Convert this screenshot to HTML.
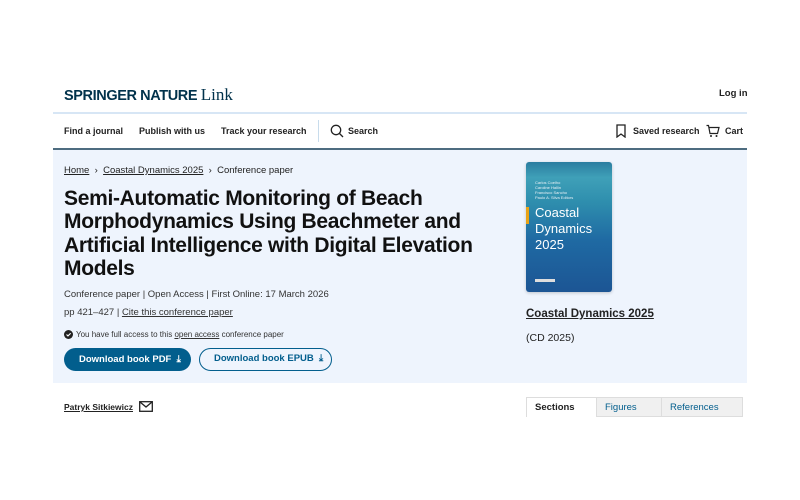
<!DOCTYPE html>
<html><head><style>
*{margin:0;padding:0;box-sizing:border-box}
body{width:800px;height:500px;background:#fff;font-family:"Liberation Sans",sans-serif;color:#222;position:relative;overflow:hidden}
.a{position:absolute}
a{color:#222}
.nav{font-size:9px;font-weight:bold;color:#222;top:126px}
</style></head><body>
<div class="a" style="left:64px;top:85px;font-size:14.5px;font-weight:bold;color:#01324b;letter-spacing:-0.4px">SPRINGER NATURE <span style="font-family:'Liberation Serif',serif;font-weight:normal;font-size:17px;letter-spacing:0">Link</span></div>
<div class="a" style="left:719px;top:88px;font-size:9.5px;font-weight:bold">Log in</div>
<div class="a" style="left:53px;top:112px;width:694px;height:2px;background:#d7e6f5"></div>
<div class="a nav" style="left:64px">Find a journal</div>
<div class="a nav" style="left:139px">Publish with us</div>
<div class="a nav" style="left:221px">Track your research</div>
<div class="a" style="left:318px;top:120px;width:1px;height:22px;background:#c8dcec"></div>
<svg class="a" style="left:330px;top:124px" width="14" height="14" viewBox="0 0 14 14"><circle cx="6" cy="6" r="4.7" fill="none" stroke="#222" stroke-width="1.3"/><path d="M9.5 9.5L13 13" stroke="#222" stroke-width="1.3"/></svg>
<div class="a nav" style="left:348px">Search</div>
<svg class="a" style="left:615px;top:124px" width="12" height="14" viewBox="0 0 12 14"><path d="M2 1h8v12L6 10 2 13z" fill="none" stroke="#222" stroke-width="1.3"/></svg>
<div class="a nav" style="left:633px">Saved research</div>
<svg class="a" style="left:706px;top:124px" width="14" height="14" viewBox="0 0 14 14"><path d="M0.5 1.5h2l1.5 8h7.5l1.5-6H3" fill="none" stroke="#222" stroke-width="1.2"/><circle cx="5" cy="12" r="1" fill="#222"/><circle cx="10.5" cy="12" r="1" fill="#222"/></svg>
<div class="a nav" style="left:725px">Cart</div>
<div class="a" style="left:53px;top:148px;width:694px;height:2px;background:#4d6c80"></div>
<div class="a" style="left:53px;top:150px;width:694px;height:233px;background:#eef4fd"></div>
<div class="a" style="left:64px;top:165px;font-size:9.5px"><u>Home</u> &nbsp;›&nbsp; <u>Coastal Dynamics 2025</u> &nbsp;›&nbsp; Conference paper</div>
<div class="a" style="left:64px;top:187px;width:440px;font-size:21px;font-weight:bold;line-height:23.3px;letter-spacing:-0.3px;color:#111">Semi-Automatic Monitoring of Beach Morphodynamics Using Beachmeter and Artificial Intelligence with Digital Elevation Models</div>
<div class="a" style="left:64px;top:289px;font-size:9.5px;color:#333">Conference paper | Open Access | First Online: 17 March 2026</div>
<div class="a" style="left:64px;top:307px;font-size:9.5px;color:#333">pp 421–427 | <u>Cite this conference paper</u></div>
<svg class="a" style="left:64px;top:330px" width="9" height="9" viewBox="0 0 10 10"><circle cx="5" cy="5" r="5" fill="#222"/><path d="M2.8 5l1.6 1.6L7.4 3.6" stroke="#fff" fill="none" stroke-width="1.2"/></svg>
<div class="a" style="left:76px;top:330px;font-size:8px;color:#333">You have full access to this <u>open access</u> conference paper</div>
<div class="a" style="left:64px;top:348px;width:127px;height:23px;border-radius:12px;background:#025e8d;color:#fff;font-size:9.5px;font-weight:bold;line-height:23px;padding-left:15px">Download book PDF &nbsp;⤓</div>
<div class="a" style="left:199px;top:348px;width:133px;height:23px;border-radius:12px;border:1.5px solid #025e8d;color:#025e8d;font-size:9.5px;font-weight:bold;line-height:20px;padding-left:14px">Download book EPUB &nbsp;⤓</div>
<div class="a" style="left:526px;top:162px;width:86px;height:130px;border-radius:3px;background:linear-gradient(#2a7da0 0%,#3fa0b8 12%,#2f8fae 30%,#1f6aa3 60%,#1c5594 100%);overflow:hidden;box-shadow:0 1px 3px rgba(0,0,0,.2)">
<div class="a" style="left:0;top:45px;width:3px;height:17px;background:#e8a317"></div>
<div class="a" style="left:9px;top:18px;font-size:4px;color:#e6f0f5;line-height:5px">Carlos Coelho<br>Caroline Hallin<br>Francisco Sancho<br>Paulo A. Silva Editors</div>
<div class="a" style="left:9px;top:43px;font-size:13px;color:#fff;line-height:16px">Coastal<br>Dynamics<br>2025</div>
<div class="a" style="left:9px;top:117px;width:20px;height:3px;background:#ddd"></div>
</div>
<div class="a" style="left:526px;top:308px;font-size:11.5px;font-weight:bold"><u>Coastal Dynamics 2025</u></div>
<div class="a" style="left:526px;top:332px;font-size:10.5px">(CD 2025)</div>
<div class="a" style="left:64px;top:402px;font-size:8.5px;font-weight:bold"><u>Patryk Sitkiewicz</u></div>
<svg class="a" style="left:139px;top:401px" width="14" height="11" viewBox="0 0 14 11"><rect x="0.7" y="0.7" width="12.6" height="9.6" fill="none" stroke="#222" stroke-width="1.3"/><path d="M1 1l6 5 6-5" fill="none" stroke="#222" stroke-width="1.3"/></svg>
<div class="a" style="left:526px;top:397px;width:217px;height:20px;background:#f0f0f0;border:1px solid #ddd"></div>
<div class="a" style="left:526px;top:397px;width:71px;height:20px;background:#fff;border:1px solid #ddd;border-bottom:none;font-size:9.5px;font-weight:bold;line-height:19px;padding-left:8px">Sections</div>
<div class="a" style="left:605px;top:402px;font-size:9.5px;color:#025e8d">Figures</div>
<div class="a" style="left:670px;top:402px;font-size:9.5px;color:#025e8d">References</div>
<div class="a" style="left:661px;top:398px;width:1px;height:18px;background:#ddd"></div>
</body></html>
